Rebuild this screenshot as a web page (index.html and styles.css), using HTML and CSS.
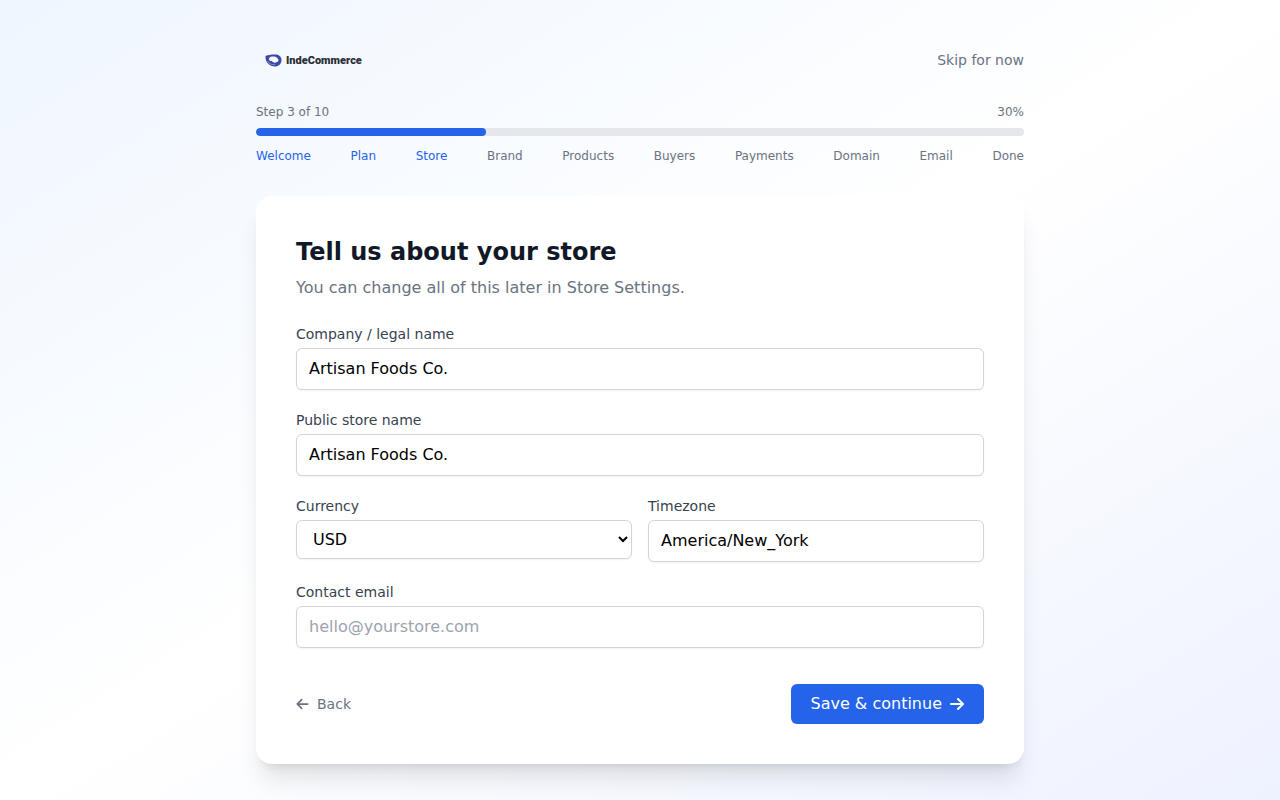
FILE: index.html
```
<!DOCTYPE html>
<html lang="en">
<head>
    <meta charset="UTF-8">
    <meta name="viewport" content="width=device-width, initial-scale=1.0">
    <title>Store setup - IndeCommerce</title>
    <link rel="stylesheet" href="styles.css">
</head>
<body>
    <div class="container">
        <header class="topbar">
            <a href="#" class="logo" aria-label="IndeCommerce">
                <svg class="logo-mark" viewBox="0 0 34 26" aria-hidden="true">
                    <path fill="#3d49a5" fill-rule="evenodd" d="M1 4C6 2 12 1 19 1c9 0 14 4 14 11 0 8-6 13-13 13C9 25 0 16 1 4zm7 6c0 4 3 4 6 4 2 4 7 4 10 2 3-1 4-4 2-6-2-4-6-5-10-5-4 0-8 1-8 5z"/>
                    <path fill="none" stroke="#9aa4da" stroke-width="1.500" d="M5 14c3 6 9 8 15 7"/>
                </svg>
                <span class="logo-text">IndeCommerce</span>
            </a>
            <a href="#" class="skip">Skip for now</a>
        </header>

        <div class="progress">
            <div class="progress-info">
                <span>Step 3 of 10</span>
                <span>30%</span>
            </div>
            <div class="progress-track">
                <div class="progress-bar" style="width: 30%"></div>
            </div>
            <ol class="steps">
                <li class="done">Welcome</li>
                <li class="done">Plan</li>
                <li class="done">Store</li>
                <li>Brand</li>
                <li>Products</li>
                <li>Buyers</li>
                <li>Payments</li>
                <li>Domain</li>
                <li>Email</li>
                <li>Done</li>
            </ol>
        </div>

        <main class="card">
            <h1>Tell us about your store</h1>
            <p class="intro">You can change all of this later in Store Settings.</p>

            <form class="store-form">
                <div class="field">
                    <label for="company">Company / legal name</label>
                    <input type="text" id="company" value="Artisan Foods Co.">
                </div>
                <div class="field">
                    <label for="storeName">Public store name</label>
                    <input type="text" id="storeName" value="Artisan Foods Co.">
                </div>
                <div class="field-row">
                    <div class="field">
                        <label for="currency">Currency</label>
                        <select id="currency">
                            <option>USD</option>
                            <option>CAD</option>
                            <option>EUR</option>
                            <option>GBP</option>
                        </select>
                    </div>
                    <div class="field">
                        <label for="timezone">Timezone</label>
                        <input type="text" id="timezone" value="America/New_York">
                    </div>
                </div>
                <div class="field">
                    <label for="email">Contact email</label>
                    <input type="email" id="email" placeholder="hello@yourstore.com">
                </div>

                <div class="actions">
                    <a href="#" class="back">
                        <svg class="icon-back" viewBox="0 0 448 512" aria-hidden="true"><path fill="currentColor" d="M9.400 233.400c-12.500 12.500-12.500 32.800 0 45.300l160 160c12.500 12.500 32.800 12.500 45.300 0s12.500-32.800 0-45.300L109.200 288H416c17.700 0 32-14.300 32-32s-14.300-32-32-32H109.300L214.600 118.600c12.500-12.500 12.500-32.800 0-45.300s-32.800-12.500-45.300 0l-160 160z"/></svg>
                        Back
                    </a>
                    <button type="submit" class="btn">
                        Save &amp; continue
                        <svg class="icon-next" viewBox="0 0 448 512" aria-hidden="true"><path fill="currentColor" d="M438.600 278.600c12.500-12.500 12.500-32.800 0-45.300l-160-160c-12.500-12.500-32.800-12.500-45.300 0s-12.500 32.800 0 45.300L338.800 224H32c-17.700 0-32 14.300-32 32s14.300 32 32 32h306.700L233.400 393.400c-12.500 12.500-12.500 32.800 0 45.300s32.800 12.500 45.300 0l160-160z"/></svg>
                    </button>
                </div>
            </form>
        </main>
    </div>
</body>
</html>
```
FILE: styles.css
```
* {
    box-sizing: border-box;
}
body {
    margin: 0;
    min-height: 100vh;
    font-family: "DejaVu Sans", sans-serif;
    font-size: 16px;
    line-height: 24px;
    color: #111827;
    background: linear-gradient(to bottom right, #eff6ff, #ffffff, #eef2ff);
}
.container {
    max-width: 800px;
    margin: 0 auto;
    padding: 40px 16px;
}
a {
    color: inherit;
    text-decoration: none;
}

/* Header */
.topbar {
    display: flex;
    align-items: center;
    justify-content: space-between;
    height: 40px;
    margin-bottom: 24px;
}
.logo {
    display: flex;
    align-items: center;
    gap: 4px;
    padding-left: 9px;
}
.logo-mark {
    width: 17px;
    height: 13px;
}
.logo-text {
    padding-top: 2px;
    font-family: Roboto, sans-serif;
    font-size: 11px;
    font-weight: 900;
    color: #2b2d33;
}
.skip {
    font-size: 14px;
    line-height: 20px;
    color: #6b7280;
}

/* Progress */
.progress {
    margin-bottom: 32px;
    font-size: 12px;
    line-height: 16px;
    color: #6b7280;
}
.progress-info {
    display: flex;
    justify-content: space-between;
    margin-bottom: 8px;
}
.progress-track {
    height: 8px;
    background: #e5e7eb;
    border-radius: 4px;
    overflow: hidden;
}
.progress-bar {
    height: 100%;
    background: #2563eb;
    border-radius: 4px;
}
.steps {
    display: flex;
    justify-content: space-between;
    list-style: none;
    margin: 12px 0 0;
    padding: 0;
}
.steps .done {
    color: #2563eb;
}

/* Card */
.card {
    padding: 40px;
    background: #ffffff;
    border-radius: 16px;
    box-shadow: 0 20px 25px -5px rgba(0,0,0,0.1), 0 8px 10px -6px rgba(0,0,0,0.1);
}
h1 {
    margin: 0 0 8px;
    font-size: 24px;
    line-height: 32px;
    font-weight: 700;
}
.intro {
    margin: 0 0 24px;
    color: #6b7280;
}
.store-form {
    display: grid;
    gap: 20px;
}
.field-row {
    display: grid;
    grid-template-columns: 1fr 1fr;
    gap: 16px;
}
label {
    display: block;
    margin-bottom: 4px;
    font-size: 14px;
    line-height: 20px;
    color: #374151;
}
input, select {
    display: block;
    width: 100%;
    padding: 8px 12px;
    font-family: inherit;
    font-size: 16px;
    line-height: 24px;
    color: #000000;
    background: #ffffff;
    border: 1px solid #d1d5db;
    border-radius: 6px;
    box-shadow: 0 1px 2px rgba(0,0,0,0.05);
}
input::placeholder {
    color: #9ca3af;
}
.actions {
    display: flex;
    align-items: center;
    justify-content: space-between;
    padding-top: 16px;
}
.back {
    display: flex;
    align-items: center;
    gap: 8px;
    font-size: 14px;
    line-height: 20px;
    color: #6b7280;
}
.icon-back {
    width: 13px;
    height: 14px;
}
.btn {
    display: flex;
    align-items: center;
    gap: 8px;
    padding: 8px 20px;
    font-family: inherit;
    font-size: 16px;
    line-height: 24px;
    color: #ffffff;
    background: #2563eb;
    border: none;
    border-radius: 6px;
    cursor: pointer;
}
.btn:hover {
    background: #1d4ed8;
}
.icon-next {
    width: 14px;
    height: 16px;
}
```
